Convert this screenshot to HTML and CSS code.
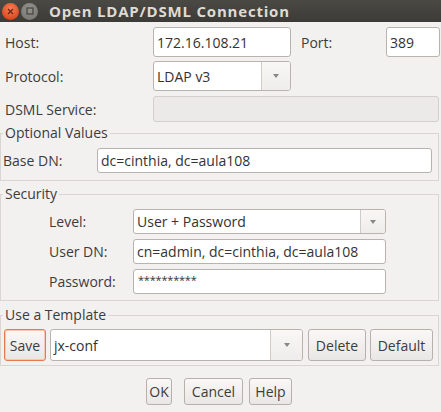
FILE: index.html
```html
<!DOCTYPE html>
<html>
<head>
<meta charset="utf-8">
<link rel="stylesheet" href="styles.css">
</head>
<body>
<div class="titlebar">
  <span class="wbtn close"><svg width="7" height="7" viewBox="0 0 7 7"><path d="M1 1L6 6M6 1L1 6" stroke="#6e2812" stroke-width="1.4" fill="none"/></svg></span>
  <span class="wbtn max"><svg width="8" height="8" viewBox="0 0 8 8"><rect x="1" y="1" width="6" height="6" fill="none" stroke="#45443f" stroke-width="1.2"/></svg></span>
  <span class="title">Open LDAP/DSML Connection</span>
</div>
<div class="content">
  <div class="row h30">
    <span class="lbl-top">Host:</span>
    <div class="entry w-host">172.16.108.21</div>
    <span class="lbl-port">Port:</span>
    <div class="entry w-port">389</div>
  </div>
  <div class="row h30 mt4">
    <span class="lbl-top">Protocol:</span>
    <div class="combo w-host">
      <div class="combo-text">LDAP v3</div>
      <div class="combo-btn b30"><span class="arrow"></span></div>
    </div>
  </div>
  <div class="row h26 mt5">
    <span class="lbl-top">DSML Service:</span>
    <div class="entry disabled w-dsml"></div>
  </div>

  <fieldset class="frame f-opt">
    <legend>Optional Values</legend>
    <div class="row h25">
      <span class="lbl-base">Base DN:</span>
      <div class="entry w-base">dc=cinthia, dc=aula108</div>
    </div>
  </fieldset>

  <fieldset class="frame f-sec">
    <legend>Security</legend>
    <div class="row h25">
      <span class="lbl-sec">Level:</span>
      <div class="combo w-sec">
        <div class="combo-text">User + Password</div>
        <div class="combo-btn b25"><span class="arrow"></span></div>
      </div>
    </div>
    <div class="row h25 mt5">
      <span class="lbl-sec">User DN:</span>
      <div class="entry w-sec">cn=admin, dc=cinthia, dc=aula108</div>
    </div>
    <div class="row h25 mt5">
      <span class="lbl-sec">Password:</span>
      <div class="entry w-sec pw">**********</div>
    </div>
  </fieldset>

  <fieldset class="frame f-tpl">
    <legend>Use a Template</legend>
    <div class="row h32">
      <div class="btn focus w-save">Save</div>
      <div class="combo w-tcombo">
        <div class="combo-text">jx-conf</div>
        <div class="combo-btn b32"><span class="arrow"></span></div>
      </div>
      <div class="btn w-del">Delete</div>
      <div class="btn w-def">Default</div>
    </div>
  </fieldset>

  <div class="actions">
    <div class="btn w-ok">OK</div>
    <div class="btn w-cancel">Cancel</div>
    <div class="btn w-help">Help</div>
  </div>
</div>
</body>
</html>
```
FILE: styles.css
```css
* { box-sizing: border-box; }
html, body { margin: 0; padding: 0; }
body {
  width: 441px;
  height: 412px;
  overflow: hidden;
  background: #f2f1f0;
  font-family: "Open Sans", sans-serif;
  font-size: 14px;
  color: #3c3c3c;
}
.titlebar {
  height: 22px;
  display: flex;
  align-items: center;
  padding-left: 2px;
  background: linear-gradient(#4a4944, #3c3b37);
}
.wbtn {
  width: 17px;
  height: 17px;
  border-radius: 50%;
  display: flex;
  align-items: center;
  justify-content: center;
}
.close { background: radial-gradient(circle at 50% 35%, #f5825a, #df4a1e 70%, #c9401a); }
.max { margin-left: 2px; background: radial-gradient(circle at 50% 35%, #94938e, #73726d); }
.title {
  margin-left: 11px;
  font-weight: bold;
  font-size: 15px;
  letter-spacing: 0.8px;
  color: #dfdbd2;
  white-space: nowrap;
}
.content { padding-top: 5px; }
.row { display: flex; align-items: center; }
.h30 { height: 30px; }
.h26 { height: 26px; }
.h25 { height: 25px; }
.h32 { height: 32px; }
.mt4 { margin-top: 4px; }
.mt5 { margin-top: 5px; }

.lbl-top { width: 153px; padding-left: 5px; }
.lbl-port { width: 95px; padding-left: 10px; }
.lbl-base { width: 94px; }
.lbl-sec { width: 130px; padding-left: 46px; }

.entry {
  height: 100%;
  background: #fff;
  border: 1px solid #b8b4ad;
  border-radius: 3px;
  display: flex;
  align-items: center;
  padding-left: 3px;
  color: #333;
  white-space: nowrap;
  overflow: hidden;
}
.entry.disabled { background: #ebeae8; border-color: #d3d0cb; }
.pw { font-size: 11px; letter-spacing: -0.2px; padding-bottom: 4px; padding-left: 4px; }

.w-host { width: 138px; }
.w-port { width: 54px; }
.w-dsml { width: 286px; }
.w-base { width: 335px; }
.w-sec { width: 253px; }

.combo {
  height: 100%;
  display: flex;
  border: 1px solid #b8b4ad;
  border-radius: 3px;
  overflow: hidden;
  background: #fff;
}
.combo-text {
  flex: 1;
  display: flex;
  align-items: center;
  padding-left: 3px;
  color: #333;
  white-space: nowrap;
}
.combo-btn {
  border-left: 1px solid #cfccc7;
  background: linear-gradient(#f8f7f6, #eeedeb);
  display: flex;
  align-items: center;
  justify-content: center;
}
.b30 { width: 29px; }
.b25 { width: 25px; }
.b32 { width: 32px; }
.arrow {
  width: 0;
  height: 0;
  border-left: 3.5px solid transparent;
  border-right: 3.5px solid transparent;
  border-top: 4px solid #8a8885;
}

.frame {
  margin: 0;
  padding: 0 0 0 2px;
  border: 1px solid #d9d5d0;
  width: 439px;
  min-width: 0;
}
.frame legend {
  padding: 0 2px;
  line-height: 18px;
}
.f-opt { margin-top: 2px; padding-top: 6px; padding-bottom: 7px; }
.f-sec { margin-top: 4px; padding-top: 6px; padding-bottom: 6px; }
.f-tpl { margin-top: 5px; padding-top: 5px; padding-bottom: 4px; }

.btn {
  height: 100%;
  display: flex;
  align-items: center;
  justify-content: center;
  border: 1px solid #b5b1ab;
  border-radius: 3px;
  background: linear-gradient(#f9f8f7, #e9e7e5);
  color: #3c3c3c;
  white-space: nowrap;
}
.btn.focus {
  border-color: #e57a52;
  box-shadow: inset 0 0 0 1px #f6c7b4;
}
.w-save { width: 42px; margin-left: 1px; }
.w-tcombo { width: 253px; margin-left: 4px; }
.w-del { width: 58px; margin-left: 5px; }
.w-def { width: 63px; margin-left: 4px; }

.actions {
  display: flex;
  justify-content: center;
  height: 27px;
  margin-top: 12px;
  padding-right: 3px;
}
.w-ok { width: 26px; margin-right: 12px; }
.w-cancel { width: 59px; margin-right: 6px; }
.w-help { width: 43px; }
```
